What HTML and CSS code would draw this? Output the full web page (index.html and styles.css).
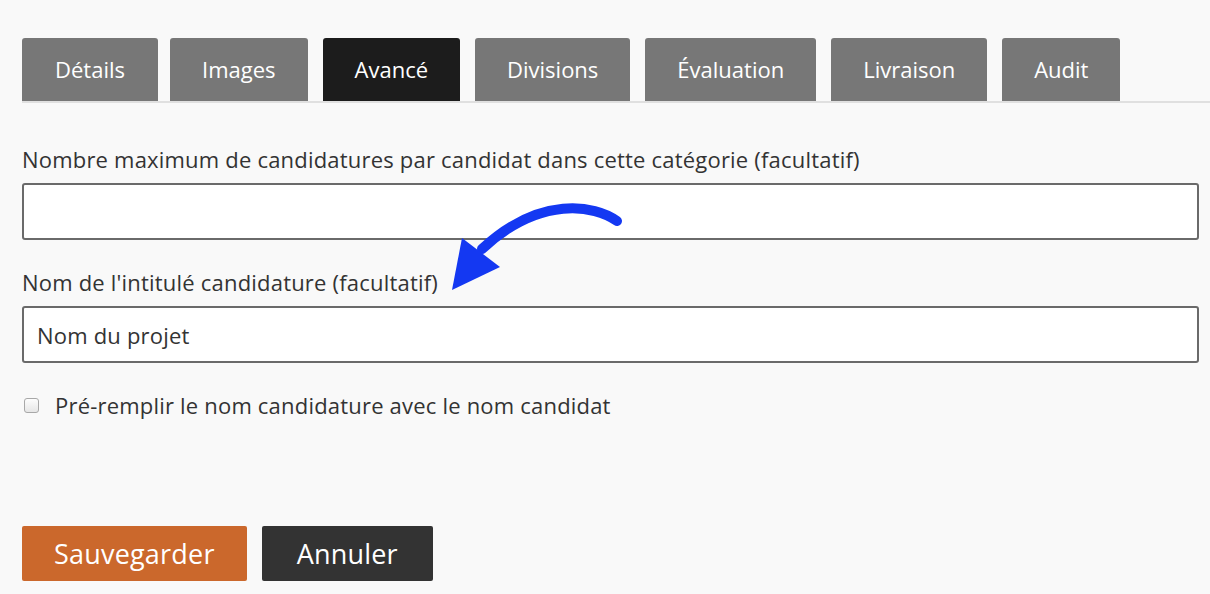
FILE: index.html
```html
<!DOCTYPE html>
<html lang="fr">
<head>
<meta charset="utf-8">
<title>Catégorie</title>
<link rel="stylesheet" href="styles.css">
</head>
<body>
<div class="page">
  <nav class="tabs">
    <a class="tab tab-first">Détails</a>
    <a class="tab">Images</a>
    <a class="tab active">Avancé</a>
    <a class="tab">Divisions</a>
    <a class="tab">Évaluation</a>
    <a class="tab">Livraison</a>
    <a class="tab">Audit</a>
  </nav>
  <form class="form">
    <div class="field">
      <label class="label">Nombre maximum de candidatures par candidat dans cette catégorie (facultatif)</label>
      <input class="input" type="text" value="">
    </div>
    <div class="field field-annotated">
      <label class="label">Nom de l'intitulé candidature (facultatif)</label>
      <input class="input" type="text" value="Nom du projet">
      <svg class="arrow" width="200" height="110" viewBox="0 0 200 110" xmlns="http://www.w3.org/2000/svg">
        <path d="M 187 32 C 165 16, 110 6, 52 60" fill="none" stroke="#1438f2" stroke-width="10" stroke-linecap="round"/>
        <polygon points="22,101 32,49 70,78" fill="#1438f2"/>
      </svg>
    </div>
    <label class="check">
      <span class="box"></span>
      <span>Pré-remplir le nom candidature avec le nom candidat</span>
    </label>
    <div class="actions">
      <button type="button" class="btn btn-save">Sauvegarder</button>
      <button type="button" class="btn btn-cancel">Annuler</button>
    </div>
  </form>
</div>
</body>
</html>
```
FILE: styles.css
```css
html, body {
  margin: 0;
  padding: 0;
  background: #f9f9f9;
  font-family: "Open Sans", "Noto Sans", sans-serif;
  color: #333;
}
.page {
  padding: 38px 0 0 22px;
}
.tabs {
  display: flex;
  gap: 15px;
  border-bottom: 2px solid #e0e0e0;
  height: 63px;
}
.tab {
  display: flex;
  align-items: center;
  padding: 0 32px;
  height: 63px;
  background: #777;
  color: #fff;
  font-size: 22px;
  line-height: 28px;
  padding-bottom: 2px;
  box-sizing: border-box;
  border-radius: 3px 3px 0 0;
}
.tab-first {
  padding: 0 33px 2px;
  margin-right: -3px;
}
.tab.active {
  background: #1c1c1c;
}
.form {
  padding-right: 11px;
}
.field {
  display: flex;
  flex-direction: column;
}
.field-annotated {
  position: relative;
}
.label {
  font-size: 22px;
  letter-spacing: 0.2px;
  line-height: 28px;
  margin-top: 42px;
  margin-bottom: 10px;
}
.field-annotated .label {
  margin-top: 28px;
}
.input {
  box-sizing: border-box;
  height: 57px;
  border: 2px solid #6a6a6a;
  border-radius: 3px;
  background: #fff;
  font-family: inherit;
  font-size: 22px;
  letter-spacing: 0.2px;
  color: #333;
  padding: 0 13px;
  margin: 0;
  outline: none;
}
.arrow {
  position: absolute;
  left: 408px;
  top: -51px;
}
.check {
  display: flex;
  align-items: center;
  gap: 16px;
  margin-top: 28px;
  font-size: 22px;
  letter-spacing: 0.2px;
  line-height: 28px;
  padding-left: 2px;
}
.box {
  box-sizing: border-box;
  width: 15px;
  height: 15px;
  border: 1px solid #a8a8a8;
  border-radius: 3px;
  background: linear-gradient(#fdfdfd, #e6e6e6);
}
.actions {
  display: flex;
  gap: 15px;
  margin-top: 107px;
}
.btn {
  height: 55px;
  border: none;
  border-radius: 2px;
  color: #fff;
  font-family: inherit;
  font-size: 27px;
  letter-spacing: 0.2px;
  padding: 0 32px;
}
.btn-save {
  background: #cb682c;
}
.btn-cancel {
  background: #333;
  padding: 0 35px;
}
```
